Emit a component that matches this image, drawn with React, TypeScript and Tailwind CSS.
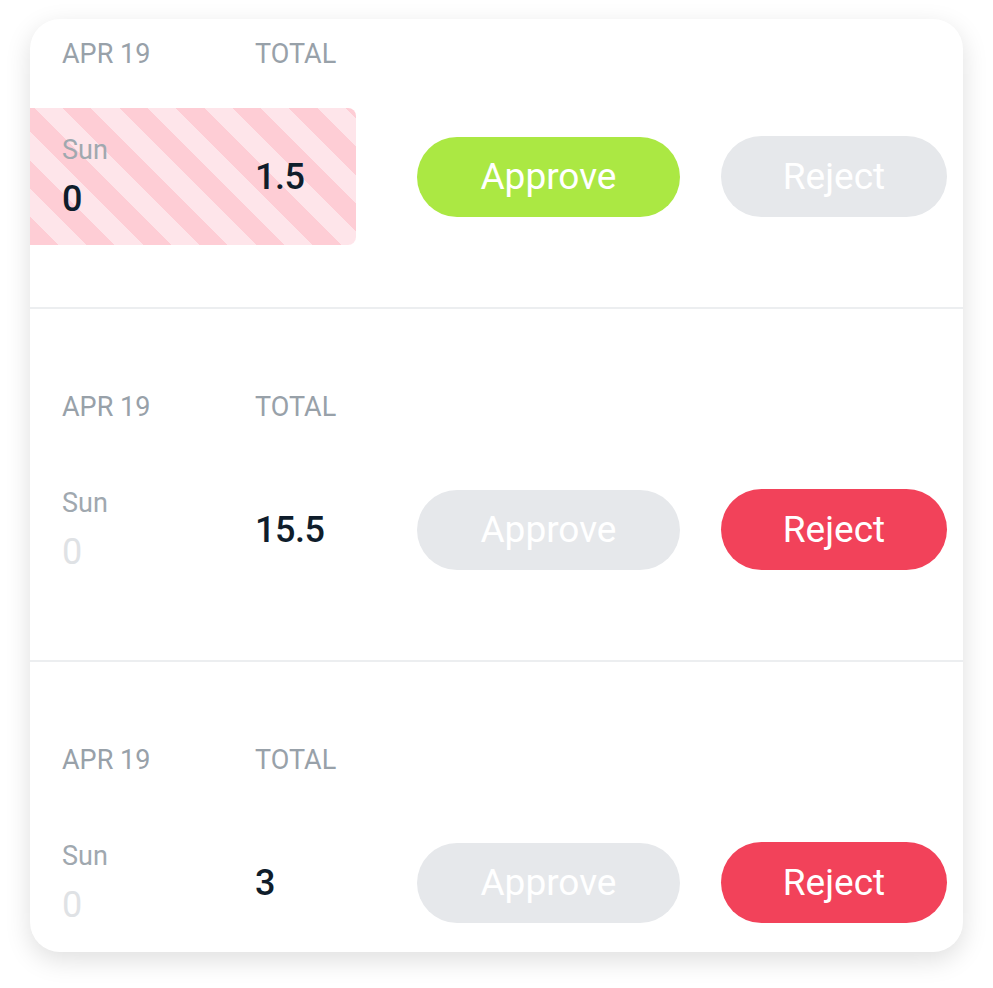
const rows = [
  { date: "APR 19", day: "Sun", hours: "0", total: "1.5", status: "approved", highlight: true },
  { date: "APR 19", day: "Sun", hours: "0", total: "15.5", status: "rejected", highlight: false },
  { date: "APR 19", day: "Sun", hours: "0", total: "3", status: "rejected", highlight: false },
];

function Row({ row, first, last }: { row: (typeof rows)[number]; first: boolean; last: boolean }) {
  const approved = row.status === "approved";
  return (
    <div
      className={`pl-[32px] ${first ? "pt-[19px]" : "pt-[82px] border-t-2 border-[#eceef0]"} ${
        last ? "pb-[2px]" : "pb-[62px]"
      }`}
    >
      {/* Header labels */}
      <div className="flex h-[32px] items-center text-[27px] leading-[32px] text-[#98a1a9]">
        <div className="w-[193px]">{row.date}</div>
        <div>TOTAL</div>
      </div>

      {/* Values + actions */}
      <div className="mt-[38px] flex items-center">
        <div
          className={`-ml-[32px] pl-[32px] w-[326px] h-[137px] flex items-center rounded-r-[8px] ${
            row.highlight
              ? "bg-[repeating-linear-gradient(45deg,#fecdd5_0px,#fecdd5_20px,#fee5ea_20px,#fee5ea_40px)]"
              : ""
          }`}
        >
          <div className="w-[193px] flex flex-col">
            <div className="text-[27px] leading-[32px] text-[#a0a8af]">{row.day}</div>
            <div
              className={`mt-[13px] text-[36px] leading-[40px] ${
                row.highlight ? "font-medium text-[#0f1d2b]" : "text-[#dfe2e5]"
              }`}
            >
              {row.hours}
            </div>
          </div>
          <div className="text-[36px] leading-[40px] font-medium tracking-[-0.5px] text-[#0f1d2b]">
            {row.total}
          </div>
        </div>

        <button
          className={`ml-[61px] w-[263px] h-[80px] rounded-full text-[37px] text-white ${
            approved ? "bg-[#abe843]" : "bg-[#e6e8eb]"
          }`}
        >
          Approve
        </button>
        <button
          className={`ml-[41px] w-[226px] h-[81px] rounded-full text-[37px] text-white ${
            approved ? "bg-[#e6e8eb]" : "bg-[#f2425a]"
          }`}
        >
          Reject
        </button>
      </div>
    </div>
  );
}

export default function App() {
  return (
    <div className="w-[993px] h-[988px] bg-white overflow-hidden" style={{ fontFamily: "Roboto, 'Liberation Sans', sans-serif" }}>
      <div className="ml-[30px] mt-[19px] w-[933px] h-[933px] rounded-[30px] bg-white overflow-hidden shadow-[0_8px_26px_rgba(0,0,0,0.13)]">
        {rows.map((row, i) => (
          <Row key={i} row={row} first={i === 0} last={i === rows.length - 1} />
        ))}
      </div>
    </div>
  );
}
